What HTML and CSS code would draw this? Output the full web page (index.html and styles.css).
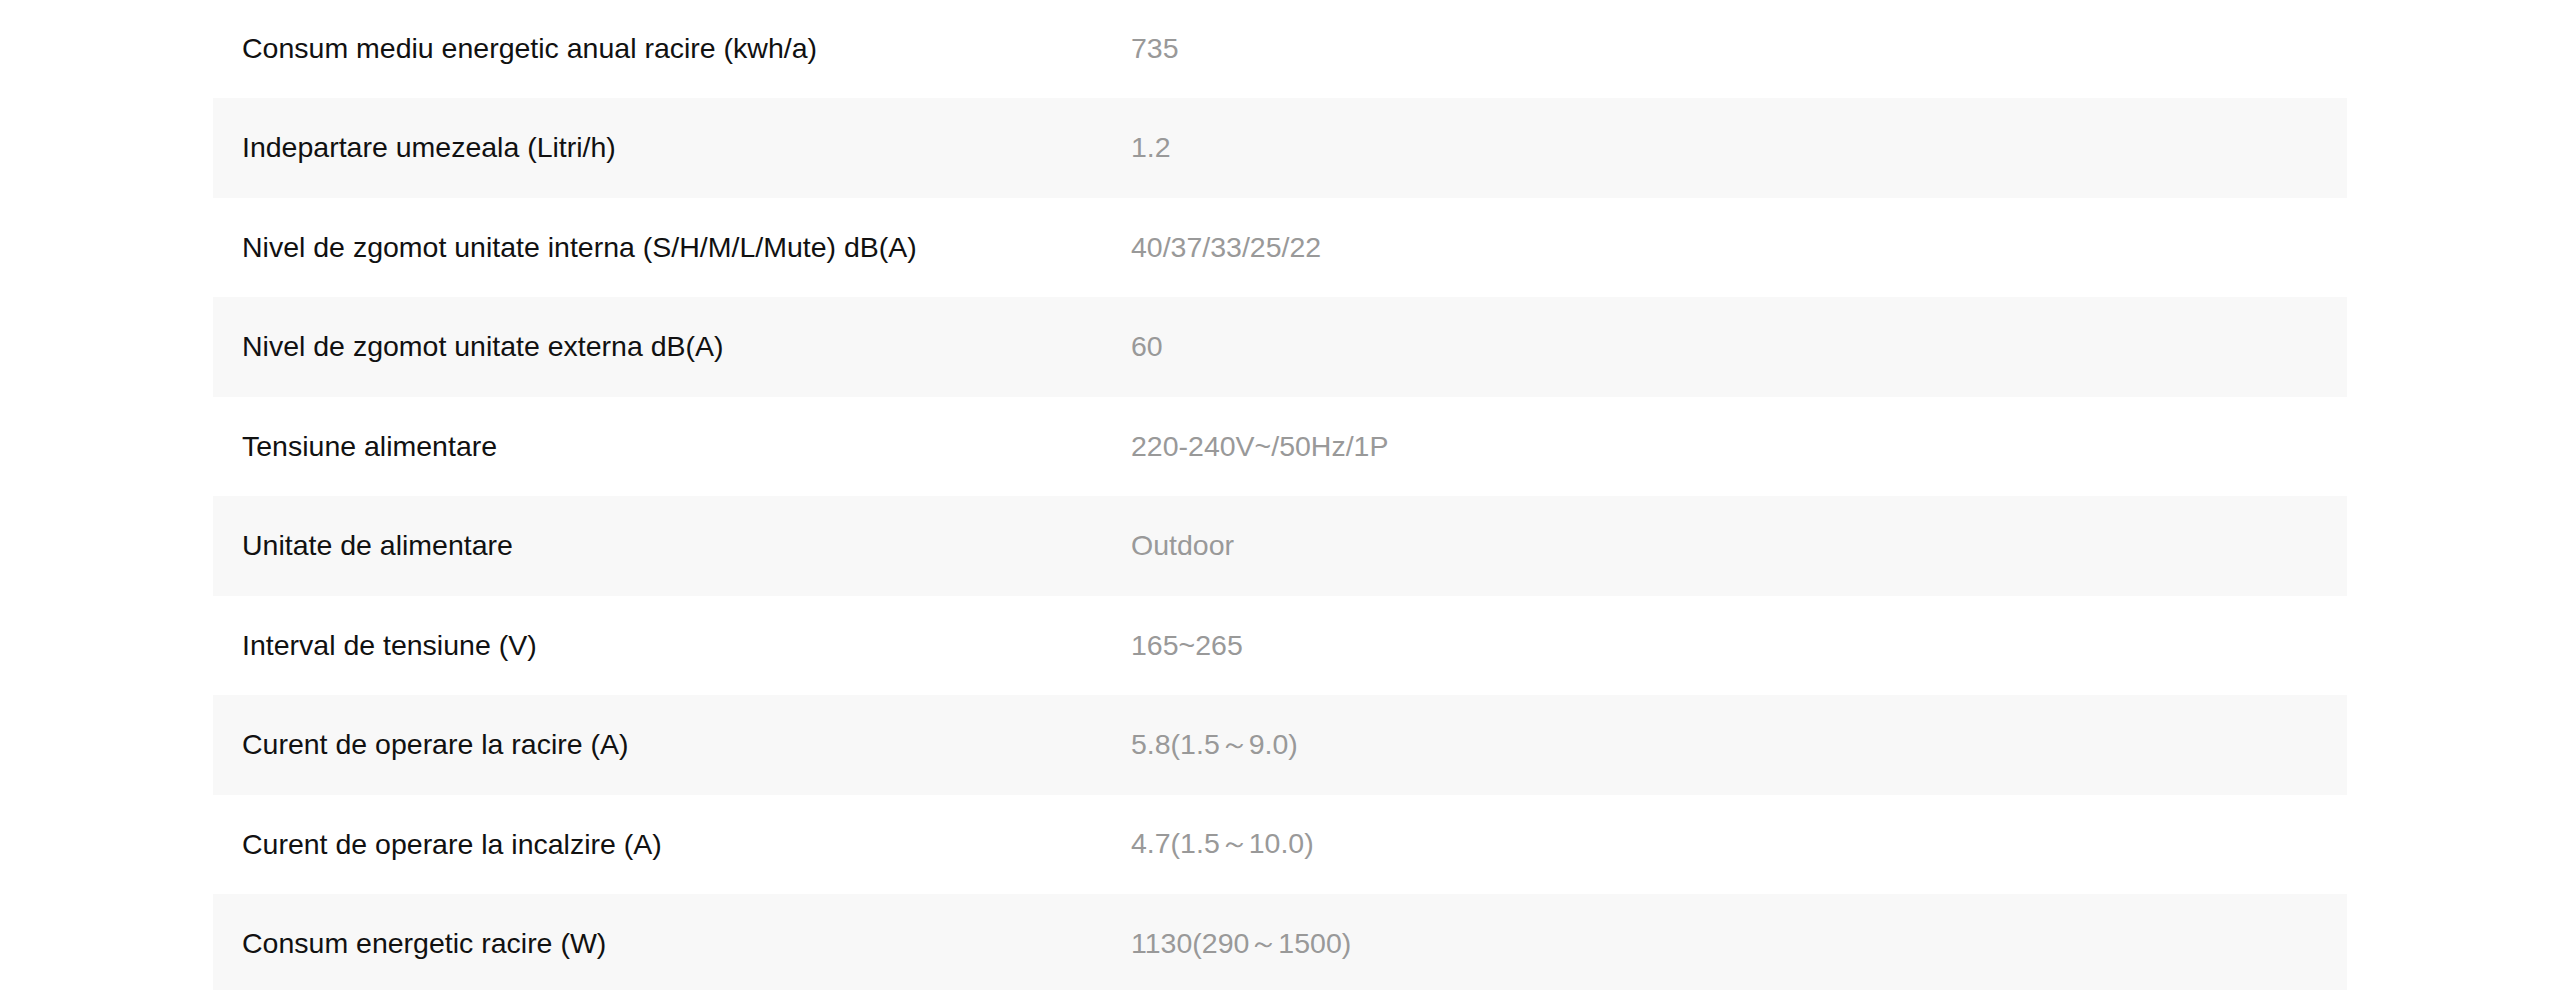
FILE: index.html
```html
<!DOCTYPE html>
<html lang="ro">

<head>
    <meta charset="UTF-8">
    <meta name="viewport" content="width=device-width, initial-scale=1.0">
    <title>Specificatii</title>
    <link rel="stylesheet" href="styles.css">
</head>

<body>
    <div class="specs">
        <div class="spec-row">
            <div class="spec-name">Consum mediu energetic anual racire (kwh/a)</div>
            <div class="spec-value">735</div>
        </div>
        <div class="spec-row">
            <div class="spec-name">Indepartare umezeala (Litri/h)</div>
            <div class="spec-value">1.2</div>
        </div>
        <div class="spec-row">
            <div class="spec-name">Nivel de zgomot unitate interna (S/H/M/L/Mute) dB(A)</div>
            <div class="spec-value">40/37/33/25/22</div>
        </div>
        <div class="spec-row">
            <div class="spec-name">Nivel de zgomot unitate externa dB(A)</div>
            <div class="spec-value">60</div>
        </div>
        <div class="spec-row">
            <div class="spec-name">Tensiune alimentare</div>
            <div class="spec-value">220-240V~/50Hz/1P</div>
        </div>
        <div class="spec-row">
            <div class="spec-name">Unitate de alimentare</div>
            <div class="spec-value">Outdoor</div>
        </div>
        <div class="spec-row">
            <div class="spec-name">Interval de tensiune (V)</div>
            <div class="spec-value">165~265</div>
        </div>
        <div class="spec-row">
            <div class="spec-name">Curent de operare la racire (A)</div>
            <div class="spec-value">5.8(1.5～9.0)</div>
        </div>
        <div class="spec-row">
            <div class="spec-name">Curent de operare la incalzire (A)</div>
            <div class="spec-value">4.7(1.5～10.0)</div>
        </div>
        <div class="spec-row">
            <div class="spec-name">Consum energetic racire (W)</div>
            <div class="spec-value">1130(290～1500)</div>
        </div>
    </div>
</body>

</html>
```

FILE: styles.css
```css
* {
    margin: 0;
    padding: 0;
    box-sizing: border-box;
}

body {
    background-color: #fff;
    font-family: "Liberation Sans", Arial, Helvetica, sans-serif;
    overflow: hidden;
}

.specs {
    width: 2134px;
    margin: -1.5px auto 0;
}

.spec-row {
    display: grid;
    grid-template-columns: 889px 1fr;
    align-items: center;
    height: 99.5px;
    font-size: 28.5px;
}

.spec-row:nth-child(even) {
    background-color: #f8f8f8;
}

.spec-name,
.spec-value {
    padding: 0 29px;
}

.spec-name {
    color: #111;
}

.spec-value {
    color: #999;
}
```
